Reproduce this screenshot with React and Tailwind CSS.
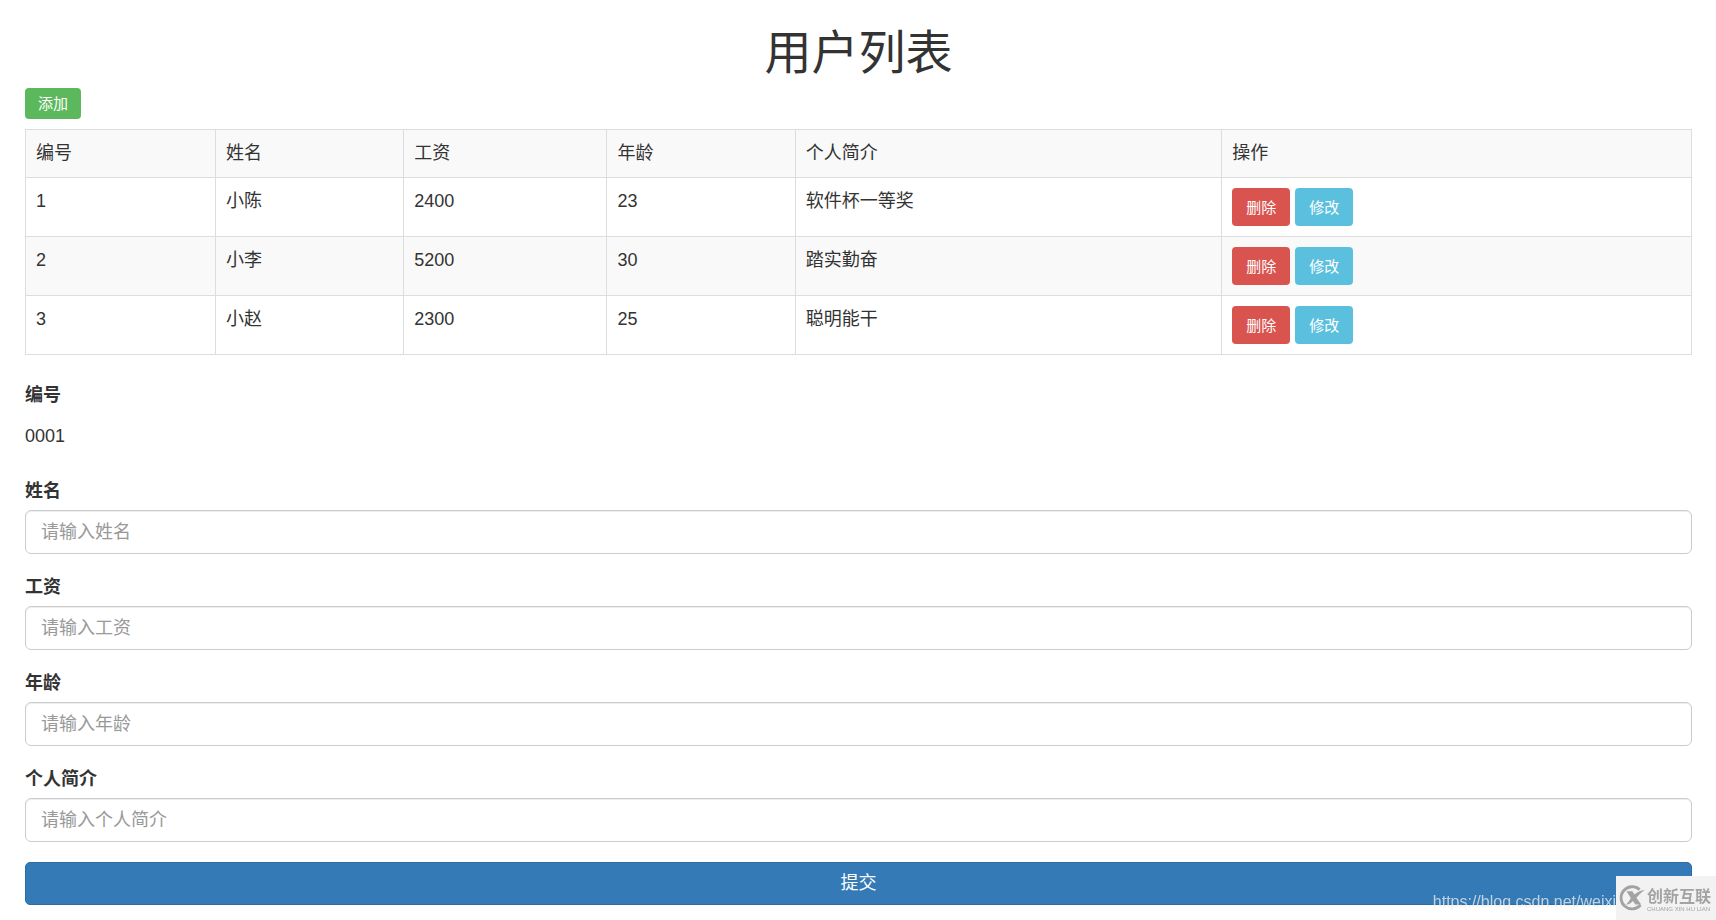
import { useState } from "react";

const initialUsers = [
  { id: 1, name: "小陈", salary: 2400, age: 23, intro: "软件杯一等奖" },
  { id: 2, name: "小李", salary: 5200, age: 30, intro: "踏实勤奋" },
  { id: 3, name: "小赵", salary: 2300, age: 25, intro: "聪明能干" },
];

const columns = [
  { title: "编号", width: "w-[11.4%]" },
  { title: "姓名", width: "w-[11.3%]" },
  { title: "工资", width: "w-[12.2%]" },
  { title: "年龄", width: "w-[11.3%]" },
  { title: "个人简介", width: "w-[25.6%]" },
  { title: "操作", width: "w-[28.2%]" },
];

const fields = [
  { key: "name", label: "姓名", placeholder: "请输入姓名" },
  { key: "salary", label: "工资", placeholder: "请输入工资" },
  { key: "age", label: "年龄", placeholder: "请输入年龄" },
  { key: "intro", label: "个人简介", placeholder: "请输入个人简介" },
];

const emptyForm = { name: "", salary: "", age: "", intro: "" };

const UserTable = ({ users, onDelete, onEdit }) => {
  const cell = "border border-[#ddd] p-[10px] text-left align-top font-normal";
  return (
    <table className="mt-[10px] w-full table-fixed border-collapse">
      <thead>
        <tr className="bg-[#f9f9f9]">
          {columns.map((column) => (
            <th key={column.title} className={`${cell} ${column.width}`}>
              {column.title}
            </th>
          ))}
        </tr>
      </thead>
      <tbody>
        {users.map((user) => (
          <tr key={user.id} className="even:bg-[#f9f9f9]">
            <td className={cell}>{user.id}</td>
            <td className={cell}>{user.name}</td>
            <td className={cell}>{user.salary}</td>
            <td className={cell}>{user.age}</td>
            <td className={cell}>{user.intro}</td>
            <td className={cell}>
              <div className="flex gap-[5px]">
                <button
                  type="button"
                  className="h-[38px] rounded bg-[#d9534f] px-[14px] text-[15px] text-white"
                  onClick={() => onDelete(user)}
                >
                  删除
                </button>
                <button
                  type="button"
                  className="h-[38px] rounded bg-[#5bc0de] px-[14px] text-[15px] text-white"
                  onClick={() => onEdit(user)}
                >
                  修改
                </button>
              </div>
            </td>
          </tr>
        ))}
      </tbody>
    </table>
  );
};

const Watermark = () => (
  <div className="pointer-events-none fixed right-0 bottom-0 flex items-end">
    <span className="pb-[6px] text-[16px] leading-[24px] text-white/70 [text-shadow:0_0_1px_rgba(0,0,0,0.15)]">
      https://blog.csdn.net/weixi
    </span>
    <div className="flex h-[44px] w-[100px] items-center gap-[2px] bg-[#f2f2f2] pl-[3px] text-[#a3a3a3]">
      <svg viewBox="0 0 26 26" className="h-[26px] w-[26px] shrink-0" fill="none">
        <path
          d="M20.6 4.6A11.1 11.1 0 1 0 21.6 20"
          stroke="currentColor"
          strokeWidth="2.8"
        />
        <path
          d="M7.5 6.200h5.800l2.300 3.200C18.400 7 21.600 5.400 25.600 5 22 7.800 19.400 10.400 17.400 12.800l4.800 6.800h-5.800l-2.500-3.500c-1.600 2-3.500 3.300-7 3.700 1.900-2 3.400-4.100 4.900-6.900z"
          fill="currentColor"
        />
      </svg>
      <div className="flex flex-col pt-1 whitespace-nowrap">
        <span className="text-[16px] leading-[18px] font-bold">创新互联</span>
        <span className="text-[6px] leading-[7px]">CHUANG XIN HU LIAN</span>
      </div>
    </div>
  </div>
);

const App = () => {
  const [users, setUsers] = useState(initialUsers);
  const [number, setNumber] = useState("0001");
  const [form, setForm] = useState(emptyForm);

  const onAdd = () => {
    setNumber(String(users.length + 1).padStart(4, "0"));
    setForm(emptyForm);
  };

  const onEdit = (user) => {
    setNumber(String(user.id).padStart(4, "0"));
    setForm({
      name: user.name,
      salary: user.salary,
      age: user.age,
      intro: user.intro,
    });
  };

  const onDelete = (user) => {
    setUsers(users.filter((item) => item.id !== user.id));
  };

  const onSubmit = (e) => {
    e.preventDefault();
    const id = Number(number);
    const rest = users.filter((item) => item.id !== id);
    setUsers([...rest, { id, ...form }].sort((a, b) => a.id - b.id));
  };

  return (
    <div className="bg-white pt-7 pr-6 pl-[25px] font-['Liberation_Sans','Noto_Sans_CJK_SC',sans-serif] text-[18px] leading-[27px] text-[#333]">
      <h1 className="mb-[10px] text-center text-[47px] leading-[50px]">用户列表</h1>
      <button
        type="button"
        className="block h-[31px] rounded bg-[#5cb85c] px-[13px] text-[15px] leading-[22px] text-white"
        onClick={onAdd}
      >
        添加
      </button>
      <UserTable users={users} onDelete={onDelete} onEdit={onEdit} />
      <form className="mt-[27px] flex flex-col gap-5" onSubmit={onSubmit}>
        <div>
          <label htmlFor="number" className="mb-[5px] block leading-[27px] font-bold">
            编号
          </label>
          <output id="number" className="flex h-[44px] items-center">
            {number}
          </output>
        </div>
        {fields.map((field) => (
          <div key={field.key}>
            <label
              htmlFor={field.key}
              className="mb-[5px] block leading-[27px] font-bold"
            >
              {field.label}
            </label>
            <input
              id={field.key}
              type="text"
              className="block h-[44px] w-full rounded-md border border-[#ccc] px-[15px] shadow-[inset_0_1px_1px_rgba(0,0,0,0.075)] outline-none placeholder:text-[#999] focus:border-[#66afe9]"
              placeholder={field.placeholder}
              value={form[field.key]}
              onChange={(e) => setForm({ ...form, [field.key]: e.target.value })}
            />
          </div>
        ))}
        <button
          type="submit"
          className="h-[43px] w-full rounded-[5px] border border-[#2e6da4] bg-[#337ab7] text-white"
        >
          提交
        </button>
      </form>
      <Watermark />
    </div>
  );
};

export default App;
